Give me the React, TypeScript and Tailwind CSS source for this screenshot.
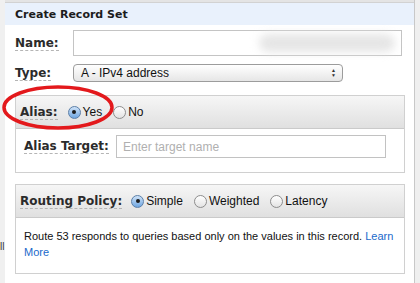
import React from "react";

const label = "font-['DejaVu_Sans',sans-serif] font-bold text-[12px] text-[#2b2b2b]";

const Radio = ({ checked, text }: { checked?: boolean; text: string }) => (
  <div className="flex items-center gap-[2px]">
    <span
      className={
        checked
          ? "flex h-[13px] w-[13px] items-center justify-center rounded-full border border-[#5b7fa8] bg-gradient-to-b from-[#cfe3f8] to-[#6fa6e0]"
          : "h-[13px] w-[13px] rounded-full border border-[#8d8d8d] bg-gradient-to-b from-[#ffffff] to-[#e3e3e3]"
      }
    >
      {checked && <span className="h-[4px] w-[4px] rounded-full bg-[#1b1b1b]" />}
    </span>
    <span className="font-['Liberation_Sans',sans-serif] text-[12px] leading-[14px] text-[#111]">{text}</span>
  </div>
);

const Label = ({ children }: { children: React.ReactNode }) => (
  <span className={`${label} block border-b border-dashed border-[#b5b5b5] leading-[14px]`}>{children}</span>
);

export default function App() {
  return (
    <div className="relative flex h-[283px] w-[420px] overflow-hidden bg-white">
      <div className="flex w-[5px] flex-col bg-[#f0f0f0] pt-[242px]">
        <span className="font-['Liberation_Sans',sans-serif] text-[10px] leading-none text-[#333]">ll</span>
      </div>

      <div className="flex flex-1 flex-col">
        <div className="h-[3px] border-b border-[#d2d2d2] bg-[#e4e4e4]" />
        <div className="flex h-[22px] items-center bg-[#e9f1fc] pl-[10px]">
          <span className="font-['DejaVu_Sans',sans-serif] text-[11px] font-bold leading-none text-[#1c1c1c]">
            Create Record Set
          </span>
        </div>

        <div className="flex flex-col pl-[10px] pr-[9px]">
          <div className="mt-[5px] flex items-center">
            <div className="flex w-[58px]">
              <Label>Name:</Label>
            </div>
            <div className="flex h-[26px] w-[329px] items-center justify-end border border-[#c4c4c4] pr-[6px]">
              <div className="h-[18px] w-[136px] rounded-full bg-[#e6e6e6] blur-[4px]" />
            </div>
          </div>

          <div className="mt-[8px] flex items-center">
            <div className="flex w-[58px]">
              <Label>Type:</Label>
            </div>
            <div className="flex h-[18px] w-[270px] items-center justify-between rounded-[4px] border border-[#9c9c9c] bg-gradient-to-b from-[#ffffff] to-[#e6e6e6] pl-[7px] pr-[6px]">
              <span className="font-['Liberation_Sans',sans-serif] text-[12px] leading-none text-[#111]">
                A - IPv4 address
              </span>
              <span className="flex flex-col items-center text-[5px] leading-[5px] text-[#333]">
                <span>▲</span>
                <span>▼</span>
              </span>
            </div>
          </div>

          <div className="mt-[13px] flex flex-col border border-[#d0d0d0]">
            <div className="flex h-[33px] items-center border-b border-[#cacaca] bg-gradient-to-b from-[#f6f6f6] to-[#e0e0e0] pl-[4px]">
              <Label>Alias:</Label>
              <div className="ml-[10px] flex items-center gap-[11px]">
                <Radio checked text="Yes" />
                <Radio text="No" />
              </div>
            </div>
            <div className="flex items-center pb-[14px] pl-[8px] pt-[6px]">
              <div className="flex w-[92px]">
                <Label>Alias Target:</Label>
              </div>
              <div className="flex h-[23px] w-[270px] items-center border border-[#c2c2c2] pl-[6px]">
                <span className="font-['Liberation_Sans',sans-serif] text-[12px] leading-none text-[#b0b0b0]">
                  Enter target name
                </span>
              </div>
            </div>
          </div>

          <div className="mt-[11px] flex flex-col border border-[#d0d0d0]">
            <div className="flex h-[33px] items-center border-b border-[#cacaca] bg-gradient-to-b from-[#f6f6f6] to-[#e0e0e0] pl-[4px]">
              <Label>Routing Policy:</Label>
              <div className="ml-[9px] flex items-center gap-[11px]">
                <Radio checked text="Simple" />
                <Radio text="Weighted" />
                <Radio text="Latency" />
              </div>
            </div>
            <div className="whitespace-nowrap pb-[13px] pl-[8px] pt-[10px] font-['Liberation_Sans',sans-serif] text-[11px] leading-[16px] text-[#111]">
              Route 53 responds to queries based only on the values in this record.{" "}
              <span className="text-[#1a6acb]">Learn</span>
              <br />
              <span className="text-[#1a6acb]">More</span>
            </div>
          </div>
        </div>
      </div>

      <div className="w-[6px] border-l border-[#c8c8c8] bg-[#efefef]" />

      <svg className="pointer-events-none absolute left-0 top-0" width="420" height="283">
        <ellipse cx="58" cy="107.5" rx="54" ry="20.5" fill="none" stroke="#e3191c" strokeWidth="3.5" />
      </svg>
    </div>
  );
}
